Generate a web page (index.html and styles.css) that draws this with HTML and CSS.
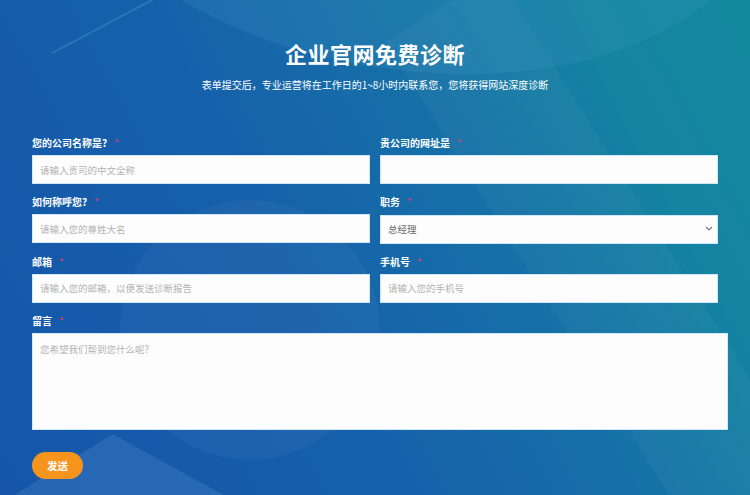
FILE: index.html
```html
<!DOCTYPE html>
<html lang="zh-CN">
<head>
<meta charset="utf-8">
<title>企业官网免费诊断</title>
<link rel="stylesheet" href="styles.css">
</head>
<body>
<div class="page">
  <div class="deco deco-arc"></div>
  <div class="deco deco-line"></div>
  <div class="deco deco-circle"></div>
  <div class="deco deco-tri"></div>
  <div class="deco deco-band"></div>
  <header class="head">
    <h1 class="title">企业官网免费诊断</h1>
    <p class="sub">表单提交后，专业运营将在工作日的1~8小时内联系您，您将获得网站深度诊断</p>
  </header>
  <form class="form">
    <div class="field">
      <label class="label">您的公司名称是?<span class="req">*</span></label>
      <input class="input" type="text" placeholder="请输入贵司的中文全称">
    </div>
    <div class="field">
      <label class="label">贵公司的网址是<span class="req">*</span></label>
      <input class="input" type="text">
    </div>
    <div class="field">
      <label class="label">如何称呼您?<span class="req">*</span></label>
      <input class="input" type="text" placeholder="请输入您的尊姓大名">
    </div>
    <div class="field">
      <label class="label">职务<span class="req">*</span></label>
      <div class="select-wrap">
        <select class="input select">
          <option>总经理</option>
        </select>
        <svg class="chev" width="8" height="5" viewBox="0 0 8 5"><path d="M1 1 L4 4 L7 1" fill="none" stroke="#777" stroke-width="1.1"/></svg>
      </div>
    </div>
    <div class="field">
      <label class="label">邮箱<span class="req">*</span></label>
      <input class="input" type="text" placeholder="请输入您的邮箱，以便发送诊断报告">
    </div>
    <div class="field">
      <label class="label">手机号<span class="req">*</span></label>
      <input class="input" type="text" placeholder="请输入您的手机号">
    </div>
    <div class="field wide">
      <label class="label">留言<span class="req">*</span></label>
      <textarea class="input area" placeholder="您希望我们帮到您什么呢?"></textarea>
    </div>
    <div class="actions">
      <button class="btn" type="button">发送</button>
    </div>
  </form>
</div>
</body>
</html>
```
FILE: styles.css
```css
html, body {
  margin: 0;
  padding: 0;
}
body {
  width: 750px;
  height: 495px;
  overflow: hidden;
  font-family: "Noto Sans CJK SC", "Noto Sans", sans-serif;
}
.page {
  position: relative;
  width: 750px;
  height: 495px;
  overflow: hidden;
  background: linear-gradient(62deg, #1556a9 0%, #1660ab 40%, #1672a7 65%, #1583a2 82%, #12899c 100%);
}
.deco {
  position: absolute;
  pointer-events: none;
}
.deco-arc {
  left: 60px;
  top: -330px;
  width: 700px;
  height: 400px;
  border-radius: 50%;
  background: rgba(60, 150, 190, 0.22);
  transform: rotate(8deg);
}
.deco-line {
  left: 45px;
  top: 24px;
  width: 120px;
  height: 2px;
  background: rgba(90, 170, 210, 0.3);
  transform: rotate(-28deg);
}
.deco-circle {
  left: 120px;
  top: 200px;
  width: 260px;
  height: 260px;
  border-radius: 50%;
  background: rgba(255, 255, 255, 0.035);
}
.deco-tri {
  left: 0;
  top: 434px;
  width: 240px;
  height: 70px;
  background: rgba(120, 170, 225, 0.18);
  clip-path: polygon(47% 0, 100% 100%, 0 100%);
}
.deco-band {
  left: 540px;
  top: -40px;
  width: 130px;
  height: 620px;
  background: rgba(255, 255, 255, 0.03);
  transform: rotate(-32deg);
}
.head {
  position: relative;
  text-align: center;
  color: #fff;
  padding-top: 37px;
}
.title {
  margin: 0;
  font-size: 22px;
  line-height: 32px;
  font-weight: 700;
  letter-spacing: 0.5px;
}
.sub {
  margin: 9px 0 0;
  font-size: 10px;
  line-height: 14px;
}
.form {
  position: relative;
  margin: 39px 0 0 32px;
  display: grid;
  grid-template-columns: 338px 338px;
  column-gap: 10px;
  row-gap: 6px;
}
.field {
  display: flex;
  flex-direction: column;
}
.wide {
  grid-column: 1 / -1;
}
.label {
  color: #fff;
  font-size: 10px;
  font-weight: 700;
  line-height: 24px;
  height: 24px;
}
.req {
  color: #e8336b;
  font-weight: 400;
  margin-left: 7px;
  font-size: 10px;
}
.input {
  box-sizing: border-box;
  width: 338px;
  height: 29px;
  margin: 0;
  border: 1px solid #cfe7f6;
  background: #fdfdfd;
  padding: 0 7px;
  font-family: "Noto Sans CJK SC", "Noto Sans", sans-serif;
  font-size: 9.5px;
  color: #555;
  outline: none;
  border-radius: 0;
}
.input::placeholder {
  color: #b3b3b3;
}
.select-wrap {
  position: relative;
  width: 338px;
}
.select {
  -webkit-appearance: none;
  appearance: none;
  color: #666;
}
.chev {
  position: absolute;
  right: 5px;
  top: 12px;
}
.area {
  display: block;
  width: 696px;
  height: 97px;
  padding: 8px 7px;
  resize: none;
}
.actions {
  grid-column: 1 / -1;
  padding-top: 16px;
}
.btn {
  display: block;
  width: 51px;
  height: 27px;
  border: none;
  border-radius: 14px;
  background: #f7941e;
  color: #fff;
  font-family: "Noto Sans CJK SC", "Noto Sans", sans-serif;
  font-size: 10.5px;
  font-weight: 700;
  padding: 0;
}
```
